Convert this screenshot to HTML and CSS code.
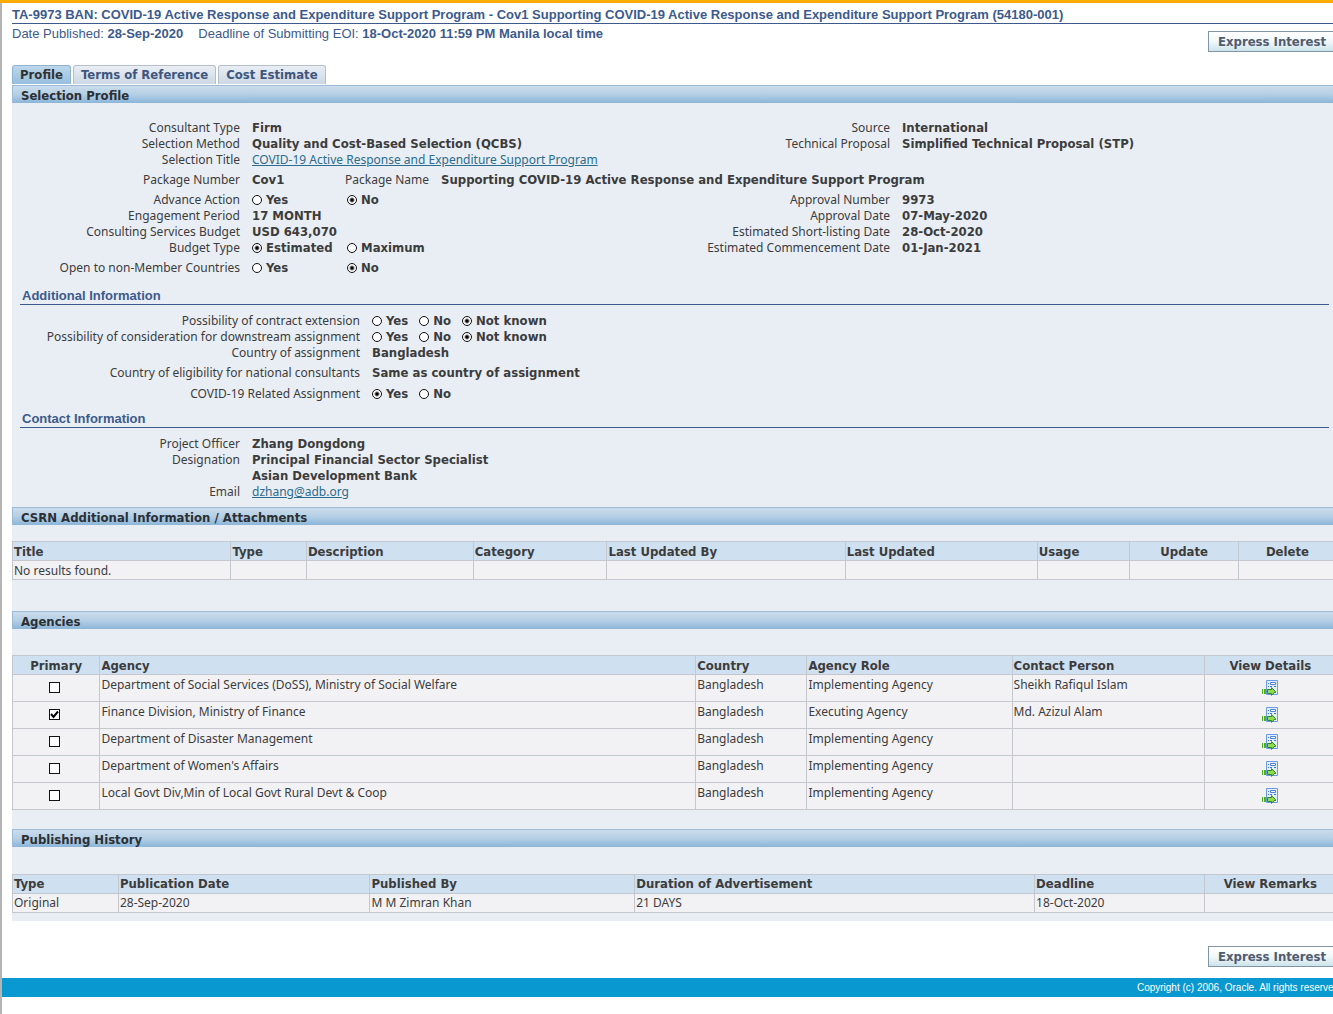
FILE: index.html
```html
<!DOCTYPE html>
<html lang="en">
<head>
<meta charset="utf-8">
<title>TA-9973 BAN: COVID-19 Active Response and Expenditure Support Program</title>
<link rel="stylesheet" href="styles.css">
</head>
<body>
<svg class="sprite" aria-hidden="true">
  <symbol id="details" viewBox="0 0 16 16">
    <path d="M4.500.5h11v14h-11z" fill="#e4eefb" stroke="#6a9be8"/>
    <path d="M8.500 2.500h5v2h-5z" fill="#fff" stroke="#4b84dc"/>
    <path d="M6 3h1v1H6zM6 6h1v1H6zM8 6h2v1H8zM12 6h2v1h-2zM13 12h1v1h-1z" fill="#3f78d4"/>
    <path d="M0 9h1v5H0zM2 9h2v5H2z" fill="#4fae25"/>
    <path d="M5.500 9.500h4V7.700l4 3.800-4 3.800v-1.800h-4z" fill="#8edc50" stroke="#2f8a1c"/>
  </symbol>
</svg>
<div class="page">
  <header class="masthead">
    <h1>TA-9973 BAN: COVID-19 Active Response and Expenditure Support Program - Cov1 Supporting COVID-19 Active Response and Expenditure Support Program (54180-001)</h1>
    <div class="dates">
      <span>Date Published: <b>28-Sep-2020</b></span>
      <span>Deadline of Submitting EOI: <b>18-Oct-2020 11:59 PM Manila local time</b></span>
    </div>
    <div class="actions"><button type="button">Express Interest</button></div>
  </header>

  <nav class="tabs">
    <a href="#profile" class="tab current">Profile</a>
    <a href="#terms" class="tab">Terms of Reference</a>
    <a href="#cost" class="tab">Cost Estimate</a>
  </nav>

  <main class="panel" id="profile">
    <h2 class="bar">Selection Profile</h2>
    <dl class="fields profile">
      <dt>Consultant Type</dt><dd>Firm</dd>
      <dt>Source</dt><dd>International</dd>
      <dt>Selection Method</dt><dd>Quality and Cost-Based Selection (QCBS)</dd>
      <dt>Technical Proposal</dt><dd>Simplified Technical Proposal (STP)</dd>
      <dt>Selection Title</dt><dd class="wide"><a href="#title">COVID-19 Active Response and Expenditure Support Program</a></dd>
      <dt class="tall">Package Number</dt>
      <dd class="tall wide package"><span>Cov1</span><span class="caption">Package Name</span><span>Supporting COVID-19 Active Response and Expenditure Support Program</span></dd>
      <dt>Advance Action</dt>
      <dd class="pair"><label><input type="radio" name="advance">Yes</label><label><input type="radio" name="advance" checked>No</label></dd>
      <dt>Approval Number</dt><dd>9973</dd>
      <dt>Engagement Period</dt><dd>17 MONTH</dd>
      <dt>Approval Date</dt><dd>07-May-2020</dd>
      <dt>Consulting Services Budget</dt><dd>USD 643,070</dd>
      <dt>Estimated Short-listing Date</dt><dd>28-Oct-2020</dd>
      <dt>Budget Type</dt>
      <dd class="pair"><label><input type="radio" name="budget" checked>Estimated</label><label><input type="radio" name="budget">Maximum</label></dd>
      <dt>Estimated Commencement Date</dt><dd>01-Jan-2021</dd>
      <dt class="tall">Open to non-Member Countries</dt>
      <dd class="tall wide pair"><label><input type="radio" name="open">Yes</label><label><input type="radio" name="open" checked>No</label></dd>
    </dl>

    <h3>Additional Information</h3>
    <dl class="fields additional">
      <dt>Possibility of contract extension</dt>
      <dd class="choices"><label><input type="radio" name="ext">Yes</label><label><input type="radio" name="ext">No</label><label><input type="radio" name="ext" checked>Not known</label></dd>
      <dt>Possibility of consideration for downstream assignment</dt>
      <dd class="choices"><label><input type="radio" name="down">Yes</label><label><input type="radio" name="down">No</label><label><input type="radio" name="down" checked>Not known</label></dd>
      <dt>Country of assignment</dt><dd>Bangladesh</dd>
      <dt class="tall">Country of eligibility for national consultants</dt><dd class="tall">Same as country of assignment</dd>
      <dt class="last">COVID-19 Related Assignment</dt>
      <dd class="last choices"><label><input type="radio" name="covid" checked>Yes</label><label><input type="radio" name="covid">No</label></dd>
    </dl>

    <h3>Contact Information</h3>
    <dl class="fields contact">
      <dt>Project Officer</dt><dd>Zhang Dongdong</dd>
      <dt>Designation</dt><dd>Principal Financial Sector Specialist<br>Asian Development Bank</dd>
      <dt>Email</dt><dd><a href="mailto:dzhang@adb.org">dzhang@adb.org</a></dd>
    </dl>

    <h2 class="bar">CSRN Additional Information / Attachments</h2>
    <table class="attachments">
      <colgroup><col class="a1"><col class="a2"><col class="a3"><col class="a4"><col class="a5"><col class="a6"><col class="a7"><col class="a8"><col></colgroup>
      <thead><tr><th>Title</th><th>Type</th><th>Description</th><th>Category</th><th>Last Updated By</th><th>Last Updated</th><th>Usage</th><th class="mid">Update</th><th class="mid">Delete</th></tr></thead>
      <tbody><tr><td>No results found.</td><td></td><td></td><td></td><td></td><td></td><td></td><td></td><td></td></tr></tbody>
    </table>

    <h2 class="bar">Agencies</h2>
    <table class="agencies">
      <colgroup><col class="g1"><col class="g2"><col class="g3"><col class="g4"><col class="g5"><col></colgroup>
      <thead><tr><th class="mid">Primary</th><th>Agency</th><th>Country</th><th>Agency Role</th><th>Contact Person</th><th class="mid">View Details</th></tr></thead>
      <tbody>
        <tr><td class="check"><input type="checkbox" aria-label="Primary"></td><td>Department of Social Services (DoSS), Ministry of Social Welfare</td><td>Bangladesh</td><td>Implementing Agency</td><td>Sheikh Rafiqul Islam</td><td class="view"><a href="#a1" aria-label="View details"><svg><use href="#details"/></svg></a></td></tr>
        <tr><td class="check"><input type="checkbox" aria-label="Primary" checked></td><td>Finance Division, Ministry of Finance</td><td>Bangladesh</td><td>Executing Agency</td><td>Md. Azizul Alam</td><td class="view"><a href="#a2" aria-label="View details"><svg><use href="#details"/></svg></a></td></tr>
        <tr><td class="check"><input type="checkbox" aria-label="Primary"></td><td>Department of Disaster Management</td><td>Bangladesh</td><td>Implementing Agency</td><td></td><td class="view"><a href="#a3" aria-label="View details"><svg><use href="#details"/></svg></a></td></tr>
        <tr><td class="check"><input type="checkbox" aria-label="Primary"></td><td>Department of Women's Affairs</td><td>Bangladesh</td><td>Implementing Agency</td><td></td><td class="view"><a href="#a4" aria-label="View details"><svg><use href="#details"/></svg></a></td></tr>
        <tr><td class="check"><input type="checkbox" aria-label="Primary"></td><td>Local Govt Div,Min of Local Govt Rural Devt &amp; Coop</td><td>Bangladesh</td><td>Implementing Agency</td><td></td><td class="view"><a href="#a5" aria-label="View details"><svg><use href="#details"/></svg></a></td></tr>
      </tbody>
    </table>

    <h2 class="bar">Publishing History</h2>
    <table class="history">
      <colgroup><col class="h1"><col class="h2"><col class="h3"><col class="h4"><col class="h5"><col></colgroup>
      <thead><tr><th>Type</th><th>Publication Date</th><th>Published By</th><th>Duration of Advertisement</th><th>Deadline</th><th class="mid">View Remarks</th></tr></thead>
      <tbody><tr><td>Original</td><td>28-Sep-2020</td><td>M M Zimran Khan</td><td>21 DAYS</td><td>18-Oct-2020</td><td></td></tr></tbody>
    </table>
  </main>

  <div class="actions bottom"><button type="button">Express Interest</button></div>
  <footer>Copyright (c) 2006, Oracle. All rights reserved.</footer>
</div>
</body>
</html>
```

FILE: styles.css
```css
* { box-sizing: border-box; }

html { overflow-x: hidden; }

body {
  margin: 0;
  min-height: 100vh;
  overflow-x: hidden;
  border-top: 3px solid #ffab00;
  background: linear-gradient(to right, #b4b4b4 2px, #fff 2px);
  color: #3c3c3c;
  font: 12px/16px "Noto Sans", sans-serif;
}

/* The content is slightly wider than the window, as the tables run past its edge. */
.page { margin: 0 -4px 0 2px; }

.sprite { display: none; }

h1, h2, h3, dl, dd { margin: 0; }

dd, th, h2, .tab, button {
  font-family: "DejaVu Sans Condensed", "DejaVu Sans", sans-serif;
  font-size: 13px;
  font-weight: bold;
}

.masthead {
  padding: 4px 0 0 10px;
  color: #3c5a8c;
  font: 13px/16px "Liberation Sans", Arial, sans-serif;
}

h1 {
  border-bottom: 1px solid #3c5a8c;
  font-size: 13px;
  line-height: 16px;
  white-space: nowrap;
}

.dates {
  display: flex;
  gap: 15px;
  height: 7px;
  padding-top: 2px;
}

.actions { display: flex; justify-content: flex-end; }

button {
  height: 21px;
  width: 129px;
  padding: 0 9px;
  border: 1px solid #8195a5;
  background: linear-gradient(#fff, #f1f8f9 50%, #cbe3ea);
  color: #4f5b70;
  line-height: 19px;
  text-align: left;
  white-space: nowrap;
}

.tabs {
  display: flex;
  gap: 2px;
  margin-left: 10px;
  padding: 13px 0 1px;
}

.tab {
  height: 19px;
  padding: 0 7px;
  border: 1px solid #b3bfcb;
  border-bottom: 0;
  border-radius: 3px 3px 0 0;
  background: linear-gradient(#e9eef4, #ccd8e4);
  color: #3f567e;
  line-height: 18px;
  text-decoration: none;
}

.tab.current {
  border-color: #8fb3d0;
  background: linear-gradient(#bdd7ea, #96bfdf);
  color: #333;
}

.panel {
  margin-left: 10px;
  padding-bottom: 8px;
  background: #e9eef5;
}

.bar {
  height: 18px;
  padding: 1px 0 0 8px;
  border: 1px solid #9dbbd6;
  border-width: 1px 0 0 1px;
  background: linear-gradient(#cadcec, #b4cfe5 50%, #8bb5d9);
  color: #2c2f33;
  line-height: 18px;
}

.fields { display: grid; column-gap: 12px; }
.fields dt { text-align: right; white-space: nowrap; }
.fields .tall { line-height: 24px; }
.fields .last { line-height: 18px; }

.profile {
  grid-template-columns: 228px minmax(0, 1fr) 191px minmax(0, 1fr);
  padding-top: 17px;
}

.profile .wide { grid-column: 2 / -1; }

.additional { grid-template-columns: 348px minmax(0, 1fr); }

.contact {
  grid-template-columns: 228px minmax(0, 1fr);
  padding-bottom: 7px;
}

.fields a, .package .caption {
  font-family: "Noto Sans", sans-serif;
  font-size: 12px;
  font-weight: normal;
}

.fields a { color: #2b6c8c; }

.package { display: grid; grid-template-columns: 81px auto 1fr; gap: 12px; }

.pair { display: grid; grid-template-columns: 95px 1fr; }
.choices { display: flex; gap: 11px; }

label { display: flex; align-items: center; gap: 4px; }

input {
  appearance: none;
  margin: 0;
  border: 1px solid #111;
  background: #fff;
}

input[type="radio"] { width: 10px; height: 10px; border-radius: 50%; }
input[type="radio"]:checked { background: radial-gradient(circle, #000 1px, #fff 3px); }

h3 {
  margin: 8px;
  padding-left: 2px;
  border-bottom: 1px solid #3c5a8c;
  color: #3c5a8c;
  font: bold 13px/16px "Liberation Sans", Arial, sans-serif;
}

table {
  width: 100%;
  border-collapse: collapse;
  table-layout: fixed;
}

th, td {
  height: 19px;
  padding: 2px 1px 0;
  border: 1px solid #c4c7ce;
  overflow: hidden;
  line-height: 16px;
  text-align: left;
  vertical-align: top;
  white-space: nowrap;
}

th { background: #cfe0f1; }
td { background: #f2f2f5; }
.mid { text-align: center; }

.attachments { margin: 16px 0 31px; }
.agencies { margin: 26px 0 19px; }
.history { margin-top: 27px; }
.history th, .history td { padding-top: 1px; }

.agencies td { height: 27px; }
.agencies .check { padding: 7px 3px 0 0; line-height: 11px; text-align: center; }
.agencies .view { padding-top: 5px; text-align: center; }

input[type="checkbox"] { width: 11px; height: 11px; vertical-align: top; }
input[type="checkbox"]:checked {
  background: #fff url("data:image/svg+xml,%3Csvg xmlns='http://www.w3.org/2000/svg' viewBox='0 0 9 9'%3E%3Cpath d='M1 4l2.500 3L8 1.500' fill='none' stroke='%23000' stroke-width='2'/%3E%3C/svg%3E");
}

.view a { display: inline-block; height: 16px; }
.view svg { display: block; width: 16px; height: 16px; }

.a1 { width: 16.5%; }
.a2 { width: 5.7%; }
.a3 { width: 12.6%; }
.a4 { width: 10.1%; }
.a5 { width: 18%; }
.a6 { width: 14.5%; }
.a7 { width: 7%; }
.a8 { width: 8.2%; }

.g1 { width: 6.6%; }
.g2 { width: 45%; }
.g3 { width: 8.4%; }
.g4 { width: 15.5%; }
.g5 { width: 14.5%; }

.h1 { width: 8%; }
.h2 { width: 19%; }
.h3 { width: 20%; }
.h4 { width: 30.2%; }
.h5 { width: 12.8%; }

.bottom { margin: 25px 0 11px; }

footer {
  margin-right: -5px;
  background: #0a98d0;
  color: #fff;
  font: 10px/19px "Liberation Sans", Arial, sans-serif;
  text-align: right;
}
```
